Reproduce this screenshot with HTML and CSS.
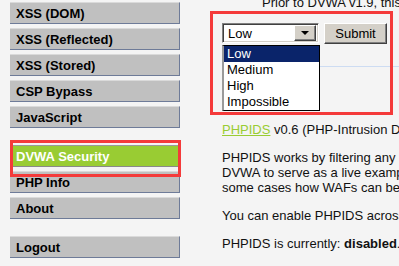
FILE: index.html
```html
<!DOCTYPE html>
<html lang="en">
<head>
  <meta charset="UTF-8" />
  <title>DVWA Security</title>
  <link rel="stylesheet" href="styles.css">
</head>
<body>

  <div class="page">
    <!-- Left menu -->
    <div class="menu">
      <ul class="menu-block">
        <li><a href="#">XSS (DOM)</a></li>
        <li><a href="#">XSS (Reflected)</a></li>
        <li><a href="#">XSS (Stored)</a></li>
        <li><a href="#">CSP Bypass</a></li>
        <li><a href="#">JavaScript</a></li>
      </ul>
      <ul class="menu-block">
        <li class="selected"><a href="#">DVWA Security</a></li>
        <li><a href="#">PHP Info</a></li>
        <li><a href="#">About</a></li>
      </ul>
      <ul class="menu-block">
        <li><a href="#">Logout</a></li>
      </ul>
    </div>

    <!-- Main content -->
    <div class="main">
      <div class="levels">Prior to DVWA v1.9, this level was known as 'high'.</div>

      <form class="security-form">
        <div class="combo">
          <span class="combo-value">Low</span>
          <span class="combo-button"><span class="arrow"></span></span>
        </div>
        <button type="button" class="submit">Submit</button>

        <!-- open dropdown -->
        <div class="combo-list">
          <div class="option active">Low</div>
          <div class="option">Medium</div>
          <div class="option">High</div>
          <div class="option">Impossible</div>
        </div>
      </form>

      <hr>

      <p><a class="green-link" href="#">PHPIDS</a> v0.6 (PHP-Intrusion Detection System) is a security layer for PHP based web applications.</p>
      <p>PHPIDS works by filtering any user supplied input against a blacklist of potentially malicious code. It is used in DVWA to serve as a live example of how Web Application Firewalls (WAFs) can help improve security and in some cases how WAFs can be circumvented.</p>
      <p>You can enable PHPIDS across this site for the duration of your session.</p>
      <p>PHPIDS is currently: <b>disabled</b>. [<a href="#">Enable PHPIDS</a>]</p>
    </div>

    <!-- annotations -->
    <div class="mark mark-menu"></div>
    <div class="mark mark-form"></div>
  </div>

</body>
</html>
```

FILE: styles.css
```css
* {
  box-sizing: border-box;
}

html, body {
  margin: 0;
  padding: 0;
  overflow: hidden;
}

body {
  font-family: "Liberation Sans", Arial, sans-serif;
  font-size: 13px;
  line-height: 15px;
  background-color: #f4f4f4;
  color: #111;
}

.page {
  position: relative;
  display: flex;
  align-items: flex-start;
  height: 266px;
}

/* Menu */
.menu {
  flex-shrink: 0;
  width: 170px;
  margin-left: 10px;
  padding-top: 2px;
}

.menu-block {
  list-style: none;
  margin: 0 0 17px 0;
  padding: 0;
}

.menu-block li {
  margin-bottom: 4px;
}

.menu-block li a {
  display: block;
  padding: 3px 6px 2px;
  line-height: 15px;
  font-weight: bold;
  color: #000;
  text-decoration: none;
  background-color: #c0c0c0;
  border-top: 1px solid #dadada;
  border-bottom: 1px solid #6e7b98;
  border-right: 1px solid #6e7b98;
}

.menu-block li.selected a {
  background-color: #99cc33;
  color: #fff;
  border-top-color: #9a9a9a;
  border-bottom-color: #8a8a8a;
  border-right-color: #99cc33;
}

/* Main */
.main {
  flex-shrink: 0;
  width: 645px;
  margin-left: 42px;
  margin-top: -5px;
}

.levels {
  padding-left: 40px;
}

.security-form {
  position: relative;
  display: flex;
  align-items: flex-start;
  margin-top: 13px;
}

.combo {
  position: relative;
  width: 97px;
  height: 20px;
  background: #fff;
  border: 1px solid;
  border-color: #808080 #fff #fff #808080;
  box-shadow: inset 1px 1px #404040, inset -1px -1px #d4d0c8;
  display: flex;
  align-items: center;
  justify-content: space-between;
  padding: 2px 2px 2px 5px;
}

.combo-value {
  line-height: 15px;
  color: #000;
}

.combo-button {
  width: 22px;
  height: 16px;
  background: #d4d0c8;
  border: 1px solid;
  border-color: #fff #404040 #404040 #fff;
  box-shadow: inset -1px -1px #808080;
  display: flex;
  align-items: center;
  justify-content: center;
}

.arrow {
  width: 0;
  height: 0;
  border-left: 4px solid transparent;
  border-right: 4px solid transparent;
  border-top: 4px solid #000;
}

.submit {
  margin-left: 5px;
  width: 63px;
  height: 21px;
  padding: 0;
  font-family: "Liberation Sans", Arial, sans-serif;
  font-size: 13px;
  color: #000;
  background: #d4d0c8;
  border: 1px solid;
  border-color: #fff #404040 #404040 #fff;
  box-shadow: inset -1px -1px #808080;
}

.combo-list {
  position: absolute;
  top: 22px;
  left: 0;
  width: 98px;
  background: #fff;
  border: 1px solid #000;
  border-left: 2px solid #9a9a9a;
  color: #000;
}

.option {
  height: 16px;
  line-height: 16px;
  padding-left: 3px;
}

.option.active {
  background: #0a246a;
  color: #fff;
}

hr {
  margin: 22px 0 55px;
  border: 0;
  border-top: 1px solid #cddcf2;
  height: 0;
}

p {
  margin: 0 0 13px 0;
}

.green-link {
  color: #99cc33;
}

a {
  color: #99cc33;
}

/* Red annotation boxes */
.mark {
  position: absolute;
  border: 3px solid #f43a3a;
}

.mark-menu {
  left: 10px;
  top: 140px;
  width: 171px;
  height: 37px;
}

.mark-form {
  left: 210px;
  top: 11px;
  width: 183px;
  height: 104px;
}
```
